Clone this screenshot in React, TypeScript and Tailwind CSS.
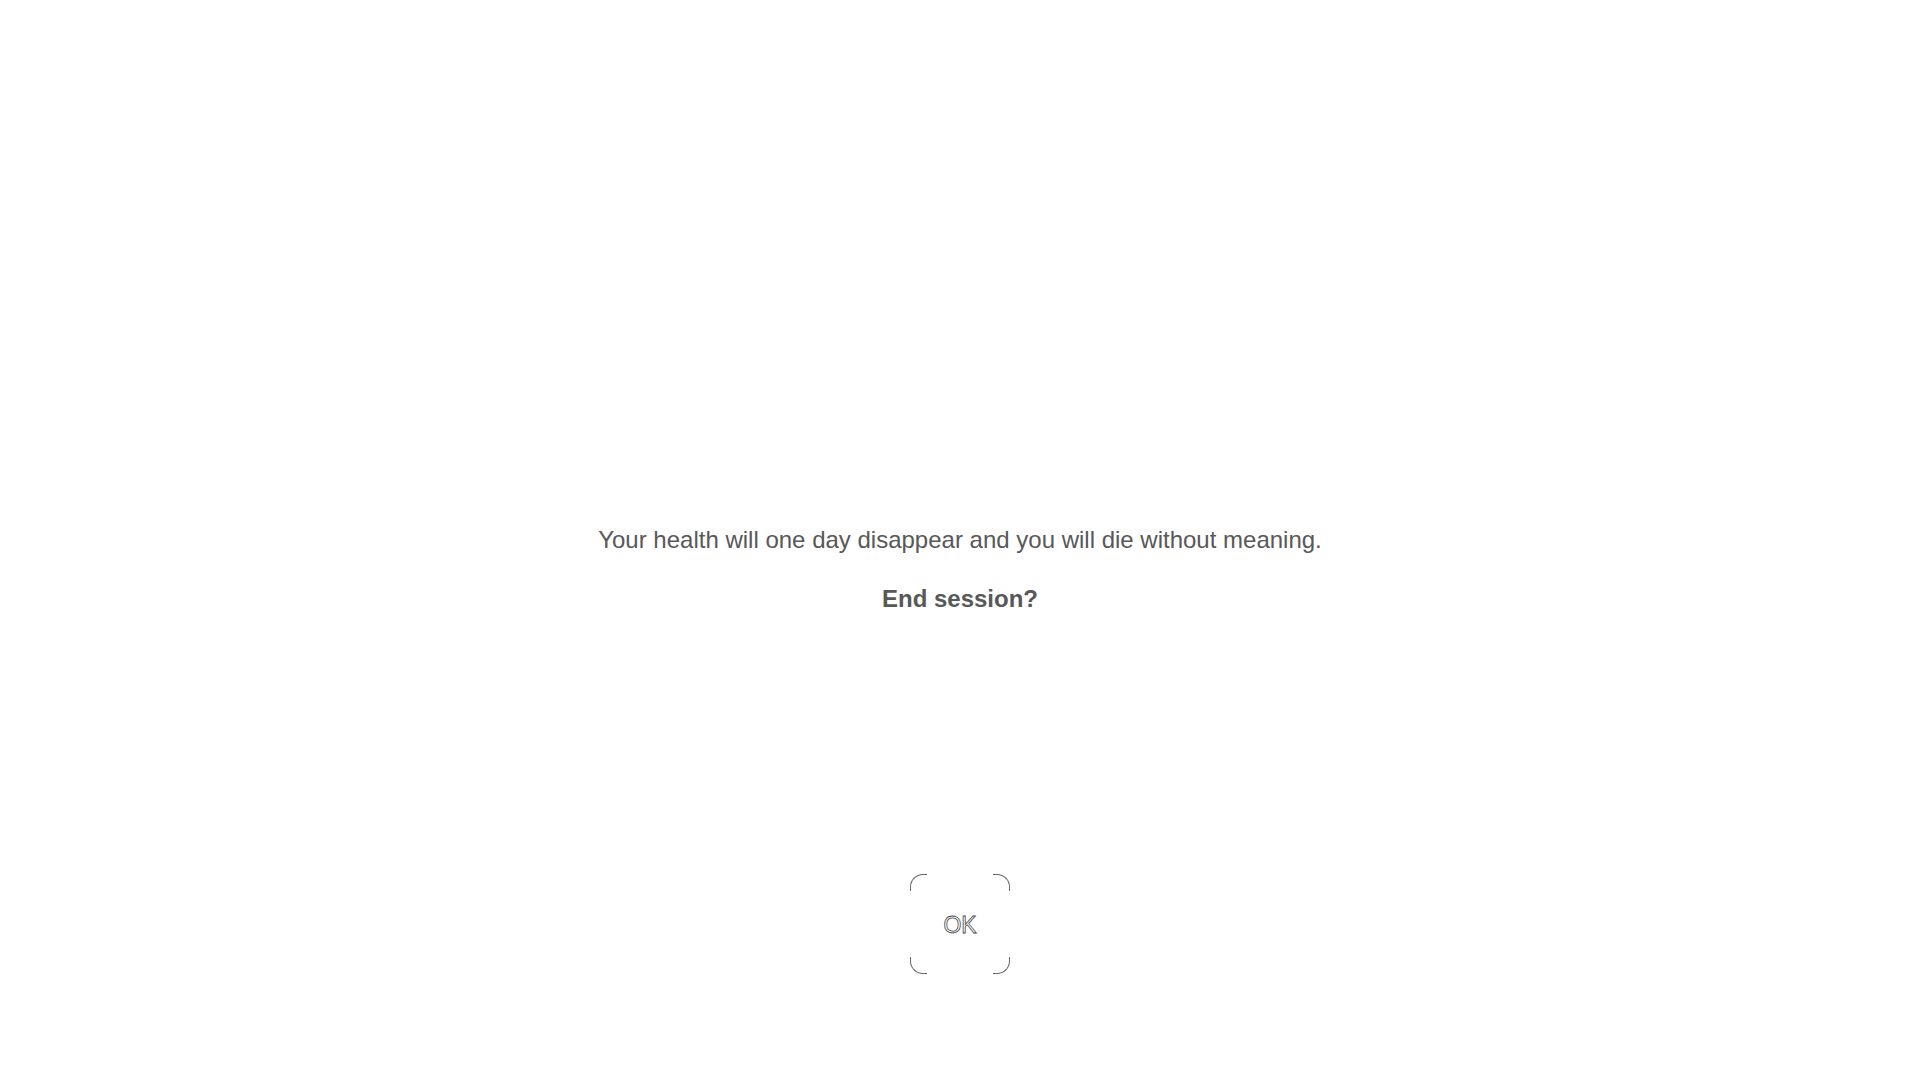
export default function App() {
  return (
    <div
      className="w-[1920px] h-[1080px] bg-white flex flex-col items-center"
      style={{ fontFamily: '"Liberation Sans", Arial, sans-serif' }}
    >
      <p className="mt-[526px] text-[24px] leading-[28px] text-[#585858]">
        Your health will one day disappear and you will die without meaning.
      </p>
      <p className="mt-[31px] text-[24px] leading-[28px] font-bold text-[#585858]">
        End session?
      </p>
      <button className="relative mt-[261px] w-[100px] h-[100px] flex items-center justify-center bg-white">
        <span className="absolute left-0 top-0 w-[17px] h-[17px] border-t border-l border-[#666] rounded-tl-[13px]" />
        <span className="absolute right-0 top-0 w-[17px] h-[17px] border-t border-r border-[#666] rounded-tr-[13px]" />
        <span className="absolute left-0 bottom-0 w-[17px] h-[17px] border-b border-l border-[#666] rounded-bl-[13px]" />
        <span className="absolute right-0 bottom-0 w-[17px] h-[17px] border-b border-r border-[#666] rounded-br-[13px]" />
        <span className="mt-[3px] text-[23px] leading-none text-white [-webkit-text-stroke:0.8px_#444]">
          OK
        </span>
      </button>
    </div>
  );
}
